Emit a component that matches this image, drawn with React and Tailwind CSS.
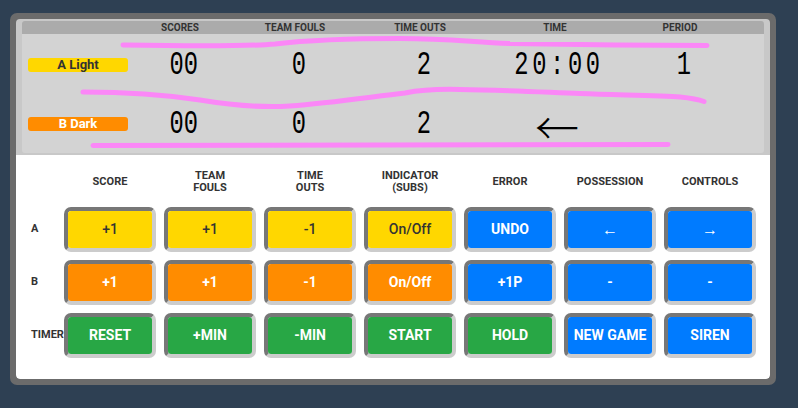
const headers = [
  ['SCORE'],
  ['TEAM', 'FOULS'],
  ['TIME', 'OUTS'],
  ['INDICATOR', '(SUBS)'],
  ['ERROR'],
  ['POSSESSION'],
  ['CONTROLS'],
];

const tones = {
  yellow: 'bg-[#ffd700] text-[#333] font-medium',
  orange: 'bg-[#ff8c00] text-white font-bold',
  blue: 'bg-[#007bff] text-white font-bold',
  green: 'bg-[#28a745] text-white font-bold',
};

const rows = [
  {
    label: 'A',
    buttons: [
      ['+1', 'yellow'], ['+1', 'yellow'], ['-1', 'yellow'], ['On/Off', 'yellow'],
      ['UNDO', 'blue'], ['←', 'blue'], ['→', 'blue'],
    ],
  },
  {
    label: 'B',
    buttons: [
      ['+1', 'orange'], ['+1', 'orange'], ['-1', 'orange'], ['On/Off', 'orange'],
      ['+1P', 'blue'], ['-', 'blue'], ['-', 'blue'],
    ],
  },
  {
    label: 'TIMER',
    buttons: [
      ['RESET', 'green'], ['+MIN', 'green'], ['-MIN', 'green'], ['START', 'green'],
      ['HOLD', 'green'], ['NEW GAME', 'blue'], ['SIREN', 'blue'],
    ],
  },
];

function Btn({ label, tone }) {
  const arrow = label === '←' || label === '→';
  return (
    <div className="h-[45px] rounded-[7px] border-4 border-solid border-[#cccccc] border-t-[#777777] border-l-[#777777]">
      <div
        className={`h-full rounded-[3px] flex items-center justify-center ${arrow ? 'text-[16px]' : 'text-[14px]'} ${tones[tone]}`}
      >
        {label}
      </div>
    </div>
  );
}

function Digits({ children, wide }) {
  return (
    <div className="flex justify-center pl-2">
      <span
        className={`inline-block font-['Liberation_Mono',monospace] text-[33px] leading-none text-black scale-x-[0.72] ${
          wide ? 'tracking-[5px]' : ''
        }`}
      >
        {children}
      </span>
    </div>
  );
}

function Scoreboard() {
  const cols = 'grid grid-cols-[108px_100px_130px_120px_150px_100px_1fr]';
  return (
    <div className="bg-[#c8c8c8] px-[6px] py-[2px]">
      <div className="rounded-[3px] overflow-hidden">
        <div className={`${cols} h-[13px] bg-[#ababab] text-[10px] leading-[13px] font-bold text-[#333] text-center`}>
          <div />
          <div>SCORES</div>
          <div>TEAM FOULS</div>
          <div>TIME OUTS</div>
          <div>TIME</div>
          <div>PERIOD</div>
          <div />
        </div>
        <div className="h-[119px] bg-[#d3d3d3] pt-[11px] flex flex-col gap-[19px]">
          <div className={`${cols} h-10 items-center`}>
            <div className="pl-[6px]">
              <div className="w-[100px] h-[14px] rounded-[3px] bg-[#ffd700] text-[#333] text-[13px] leading-[14px] font-bold text-center">
                A Light
              </div>
            </div>
            <Digits>00</Digits>
            <Digits>0</Digits>
            <Digits>2</Digits>
            <Digits wide>20:00</Digits>
            <Digits>1</Digits>
            <div />
          </div>
          <div className={`${cols} h-10 items-center`}>
            <div className="pl-[6px]">
              <div className="w-[100px] h-[14px] rounded-[3px] bg-[#ff8c00] text-white text-[13px] leading-[14px] font-bold text-center">
                B Dark
              </div>
            </div>
            <Digits>00</Digits>
            <Digits>0</Digits>
            <Digits>2</Digits>
            <div className="flex justify-center items-center pl-1 pt-[4px] h-10">
              <span className="font-['Noto_Sans_CJK_JP','DejaVu_Sans',sans-serif] font-light text-[44px] leading-[36px] text-black">←</span>
            </div>
            <div />
            <div />
          </div>
        </div>
      </div>
    </div>
  );
}

function Controls() {
  return (
    <div className="bg-white rounded-b-[4px] pt-[10px] pb-[21px] pl-[15px] grid grid-cols-[25px_repeat(7,92px)] gap-x-[8px] gap-y-[8px] text-[#333]">
      <div />
      {headers.map((h, i) => (
        <div key={i} className="h-[34px] flex flex-col items-center justify-center text-[11px] leading-[12px] font-bold">
          {h.map((line) => (
            <span key={line}>{line}</span>
          ))}
        </div>
      ))}
      {rows.map((row) => [
        <div key={row.label} className="flex items-center text-[11px] font-bold whitespace-nowrap">
          {row.label}
        </div>,
        ...row.buttons.map(([label, tone], i) => <Btn key={row.label + i} label={label} tone={tone} />),
      ])}
    </div>
  );
}

export default function App() {
  return (
    <div className="relative w-[798px] h-[408px] overflow-hidden bg-[#2e4053] pt-[13px] pl-[10px] font-['Roboto',sans-serif]">
      <div className="w-[766px] p-[6px] bg-[#6b6b6b] rounded-[7px]">
        <div className="rounded-[4px] overflow-hidden">
          <Scoreboard />
          <Controls />
        </div>
      </div>

      <svg className="absolute inset-0 pointer-events-none" width="798" height="408" viewBox="0 0 798 408" fill="none">
        <g stroke="#fb87f7" strokeWidth="5" strokeLinecap="round">
          <path d="M123,45 C180,46 240,47 275,44 C300,41 340,38.5 400,38.5 C450,38.5 470,42 510,43.5 C560,44.5 650,45.5 707,45.5" />
          <path d="M83,92 C120,92 160,94 200,100 C230,105 260,108 290,106 C330,103 370,97 405,93 C420,90 440,89 460,89.5 C500,90 540,92 580,93.5 C620,95 660,95.5 680,97 C690,98 700,100 704,101.5" />
          <path d="M93,145.5 L668,144.5" />
        </g>
      </svg>
    </div>
  );
}
